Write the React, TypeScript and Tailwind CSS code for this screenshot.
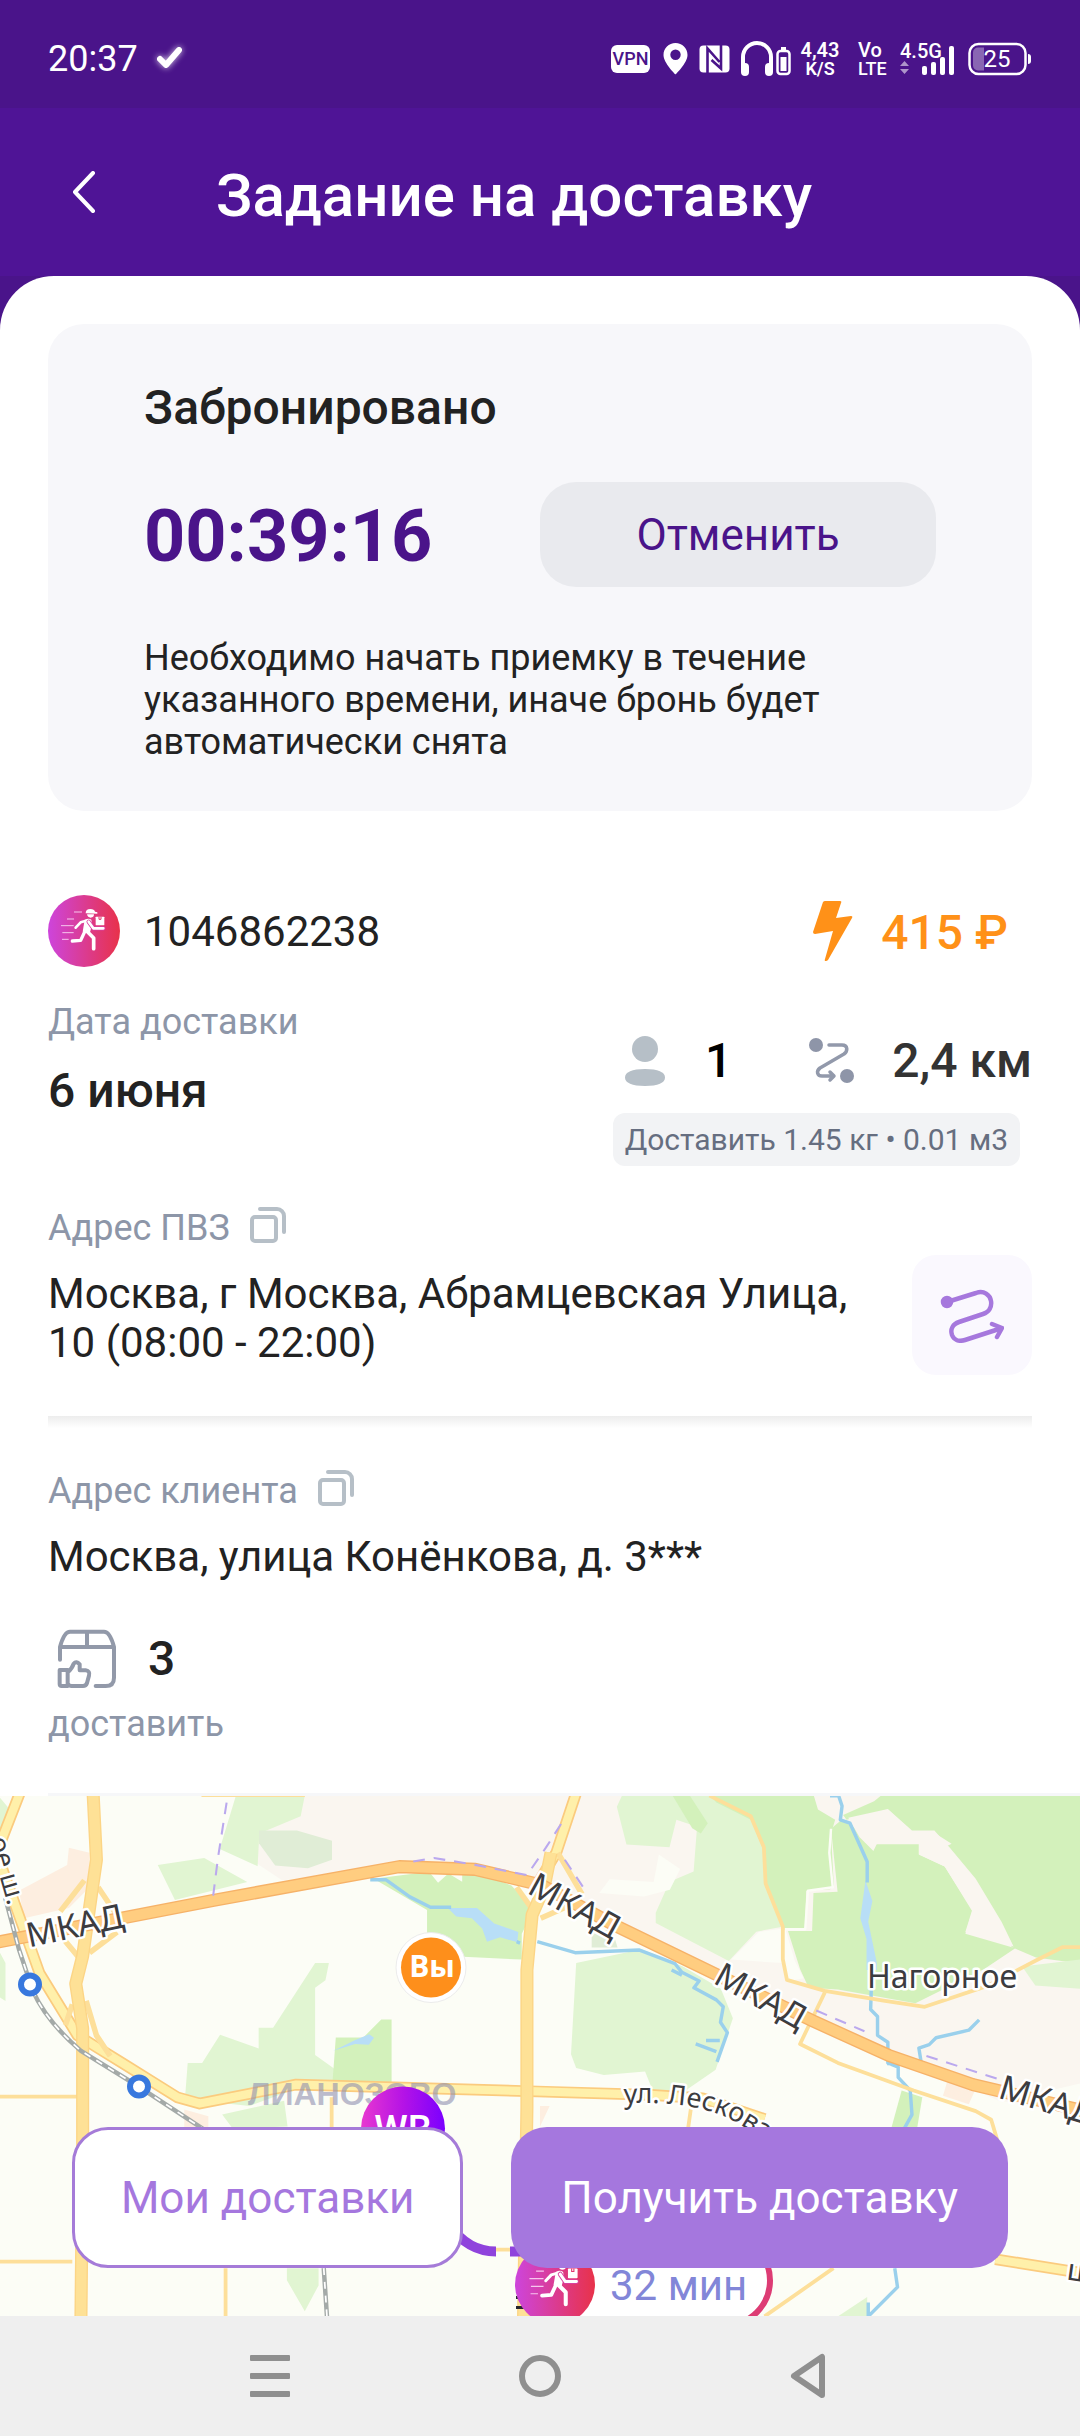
import { useId } from "react";

const ORDER = {
  id: "1046862238",
  date: "6 июня",
  price: "415 ₽",
  clients: "1",
  distance: "2,4 км",
  cargo: "Доставить 1.45 кг • 0.01 м3",
  pickup: "Москва, г Москва, Абрамцевская Улица, 10 (08:00 - 22:00)",
  client: "Москва, улица Конёнкова, д. 3***",
  items: "3",
};

function StatusBar() {
  return (
    <div className="flex h-[108px] items-center justify-between bg-[#4a148a] px-12 pt-2.5 text-white">
      <div className="flex items-center gap-4">
        <span className="text-[36px] leading-[42px]">20:37</span>
        <svg width="32" height="32" viewBox="0 0 32 32" fill="none" className="drop-shadow-[0_0_3px_rgba(255,255,255,0.8)]">
          <path d="M6 16l6 6L25 7" stroke="#fff" strokeWidth="6" strokeLinecap="round" strokeLinejoin="round" />
        </svg>
      </div>
      <div className="flex items-center">
        <span className="flex h-7 w-[39px] items-center justify-center rounded-md bg-white text-[18px] font-medium leading-none text-[#4a148a]">
          VPN
        </span>
        <svg className="ml-3" width="27" height="32" viewBox="0 0 27 32">
          <path
            fill="#fff"
            fillRule="evenodd"
            d="M13.5 0C6.800 0 1.500 5.300 1.500 12c0 8 12 19.500 12 19.500s12-11.500 12-19.500C25.500 5.300 20.200 0 13.500 0zm0 17a5.200 5.200 0 1 1 0-10.400 5.200 5.200 0 0 1 0 10.400z"
          />
        </svg>
        <svg className="ml-2.5" width="31" height="28" viewBox="0 0 31 28">
          <rect x="0.500" y="0.500" width="30" height="27" rx="4" fill="#fff" />
          <path fill="none" stroke="#4a148a" strokeWidth="2.600" d="M8.500 28V3.500L20.500 17M22 0v23.500L12.500 15" />
        </svg>
        <svg className="ml-2.5" width="52" height="36" viewBox="0 0 52 36">
          <path d="M3 30V16a14 14 0 0 1 28 0v14" fill="none" stroke="#fff" strokeWidth="4" />
          <rect x="1" y="22" width="8" height="13" rx="4" fill="#fff" />
          <rect x="25" y="22" width="8" height="13" rx="4" fill="#fff" />
          <rect x="37.500" y="10" width="12" height="23" rx="3" fill="none" stroke="#fff" strokeWidth="2.500" />
          <rect x="41" y="6" width="5" height="3" fill="#fff" />
          <rect x="40.500" y="16" width="6" height="14" fill="#fff" />
        </svg>
        <span className="ml-1.5 flex w-[44px] flex-col items-center font-semibold">
          <span className="text-[20px] leading-[20px]">4,43</span>
          <span className="text-[18px] leading-[18px]">K/S</span>
        </span>
        <span className="ml-4 flex w-[32px] flex-col font-medium">
          <span className="text-[20px] leading-[20px]">Vo</span>
          <span className="text-[18px] leading-[18px]">LTE</span>
        </span>
        <svg className="ml-2.5" width="56" height="38" viewBox="0 0 56 38" fill="#fff">
          <text x="0" y="18" fontSize="20" fontWeight="500">
            4.5G
          </text>
          <path d="M0 26l4.500-5 4.500 5zM0 29h9l-4.500 5z" opacity="0.55" />
          <rect x="22" y="26" width="5" height="9" rx="2" />
          <rect x="31" y="22" width="5" height="13" rx="2" />
          <rect x="40" y="17" width="5" height="18" rx="2" />
          <rect x="49" y="6" width="5" height="29" rx="2" />
        </svg>
        <svg className="ml-3" width="64" height="34" viewBox="0 0 64 34" fill="#fff">
          <rect x="1.500" y="2" width="56" height="30" rx="9" fill="none" stroke="#fff" strokeWidth="2.500" />
          <path d="M16 5.500H10a5 5 0 0 0-5 5v13a5 5 0 0 0 5 5h6z" opacity="0.35" />
          <path d="M60 12q3 0 3 3v4q0 3-3 3z" />
          <text x="29" y="25" fontSize="24" textAnchor="middle">
            25
          </text>
        </svg>
      </div>
    </div>
  );
}

function CourierIcon({ size = 72 }: { size?: number }) {
  const id = useId();
  return (
    <svg viewBox="12 12 216 216" width={size} height={size} fill="none">
      <defs>
        <linearGradient id={id}>
          <stop offset="0" stopColor="#cd45dc" />
          <stop offset="1" stopColor="#e8324a" />
        </linearGradient>
      </defs>
      <circle cx="120" cy="120" r="108" fill={`url(#${id})`} />
      <path d="M90 63h24M69 84h21M51 104h38M55 125h34M54 145h20" stroke="#f6c6ee" strokeWidth="3" />
      <path d="M125 67q0-13 14-13 12 0 14 8l7 2v4z" fill="#fff" />
      <path d="M129 70h21q0 10-10 10-9 0-11-10z" fill="#fff" />
      <path d="M122 86q12-6 20 0l2 16-6 22-22-2z" fill="#fff" />
      <path d="M124 90l-14 4-15 16" stroke="#fff" strokeWidth="8" strokeLinecap="round" strokeLinejoin="round" />
      <path d="M124 118l-14 30-25 2" stroke="#fff" strokeWidth="10" strokeLinecap="round" strokeLinejoin="round" />
      <path d="M128 120l21 21v32" stroke="#fff" strokeWidth="11" strokeLinecap="round" strokeLinejoin="round" />
      <path d="M134 92l14 20h30" stroke="#da3fa0" strokeWidth="13" strokeLinecap="round" strokeLinejoin="round" />
      <path d="M134 92l14 20h30" stroke="#fff" strokeWidth="8" strokeLinecap="round" strokeLinejoin="round" />
      <rect x="155" y="77" width="26" height="26" rx="2" fill="#fff" />
      <path d="M165 77v8h6v-8" stroke="#e2366f" strokeWidth="3" />
    </svg>
  );
}

function CopyButton({ label }: { label: string }) {
  return (
    <button type="button" aria-label={label}>
      <svg width="36" height="36" viewBox="0 0 36 36" fill="none" stroke="#b6bfc7" strokeWidth="4" strokeLinecap="round" strokeLinejoin="round">
        <rect x="2" y="10" width="24" height="24" rx="3" />
        <path d="M10 2h17a7 7 0 0 1 7 7v16" />
      </svg>
    </button>
  );
}

function PackageIcon() {
  return (
    <svg width="64" height="64" viewBox="24 24 192 192" fill="none" stroke="#9299a9" strokeWidth="12" strokeLinecap="round" strokeLinejoin="round">
      <path d="M36 122V84q12-46 30-46h102q18 0 30 46v92q0 25-25 25h-30M36 84h162M117 38v46" />
      <path d="M35 153h24v48H41q-6 0-6-6zM59 160q14-12 18-26 8-10 18 2v18h18q14 2 10 16l-6 22q-3 9-12 9H71q-8 0-12-8" />
    </svg>
  );
}

function MapDrawing() {
  return (
    <svg
      className="absolute inset-0 h-full w-full"
      viewBox="0 0 1080 521"
      preserveAspectRatio="xMidYMid slice"
      role="img"
      aria-label="Карта маршрута"
    >
      <defs>
        <linearGradient id="wb">
          <stop offset="0" stopColor="#e838d0" />
          <stop offset="0.5" stopColor="#b513e6" />
          <stop offset="1" stopColor="#7a00ff" />
        </linearGradient>
        <path id="leskova" d="M624 308 Q700 304 740 329 T810 372" />
      </defs>
      <rect width="1080" height="521" fill="#fcfdf6" />

      {/* terrain and roads share one fine grid */}
      <g transform="translate(0 -15) scale(0.3444)" fill="none" strokeLinejoin="round">
        <path fill="#faf6f0" d="M890 40H3140V960L2900 930 2560 780 2330 690 2080 560 1800 420 1600 300 1400 250 1160 240 820 290 745 240 750 150z" />
        <path fill="#fdeee0" d="M200 195l60 15v100l-60 60-130 30-15-80 140-75zM535 955l70 20v40h-70z" />
        <path fill="#e1f5d2" d="M685 44h200l-12 60-120 50-5 95-110-50zM458 245l135-20 125 70-210 52z" />
        <path fill="#e0edd6" d="M752 145h110l102 30v55l-70 25-95-8-47-65z" />
        <path fill="#e1f5d2" d="M915 530h40l-10 50-30 22v195l62 44 160 40v20l-142-6H860l-135 50-188-20 8-105h42l52-82 112 40v-60h42zM645 970l180-40 10 75-160 5z" />
        <path fill="#d3f1bb" d="M975 746h80l52-52h30v188H965zM1085 285l160-20 130-5 110 45 65 70-35 70v75l-170-8-105-4v-132z" />
        <path fill="#e1f5d2" d="M833 1416h92v50l-40 75-52-90zM0 50l25 30-25 70zM0 500l16 30v110l-16-10z" />
        <path fill="#fcfdf6" d="M1250 270l22 27 30-27 40 24v-30z" />
        <path fill="#b8def7" d="M1300 370h85l50 45 70 25-3 30-50-15-38 13-14-38-30-30-45-5zM968 785l62-31 42-17 14 10-15 20-40-2z" />

        <g transform="translate(1568 0)">
          <path fill="#e1f5d2" d="M115 44h380l120 60 38 90 5 105 50 125-80 15-80 85-212-110v-30l40-90 70-30 10-130-60-20-20 80-125-8-28-110 28-60-62 8z" />
          <path fill="#fcfdf6" d="M345 215l62 42-30 60-75 20-130-10 30-40 128 8z" />
          <path fill="#fcfdf6" d="M710 424l30 100 25 50-50 10-12-60zM635 440l70-10v100l-150-10z" />
          <path fill="#d3f1bb" d="M495 44h300l12 40 50 30-12 40 8 150-10 12-70 4-4 110-62 4-52-125-5-105-38-90-100-50z" />
          <path fill="#d3f1bb" d="M845 140l30-25 100 60v10h125v30l75 35 80 130-20 65 145 42-90 60-200 100-225-40-85-5-25-55-35-110h70l4-110 70-4z" />
          <path fill="#d3f1bb" d="M880 100l90-40 20-16h600v490l-150-20-70-30-15-30-90-110-90-150 20-10-55-35h-60l-70-65-120 30z" />
          <path fill="#faf6f0" d="M895 108l115-25 70 62h65l45 50 75 90 75 125 35 72-140-42 20-65-80-125-75-35v-35h-120l-12 25-40-40z" />
          <path fill="#d3f1bb" d="M385 44h50l52 80-20 30-25-15z" />
          <path fill="#e1f5d2" d="M105 530l190-40 120 50 110 65 35 85-50 150-80 55-20 25h-75l-30-75-120 10-80-20-15-40z" />
          <path fill="#e0edd6" d="M150 435h60l15 50h-75z" />
          <path fill="#e1f5d2" d="M1400 540l168-20v85l-130-10z" />
          <path fill="#fcfdf6" d="M1568 880l-130 30 130 60z" />
          <path fill="#d3f1bb" d="M1050 900l60 20-15 90h-75z" />
          <path fill="#fdeee0" d="M1185 865l80 30-20 45-75-25zM0 945h28L0 1005z" />
          <path fill="#e1f5d2" d="M950 1500v56h-85z" />
          <path fill="#b8def7" d="M945 290l20 60-12 60 25 120v20h-30v-90l-18-60z" />
          <path stroke="#fcfdf6" strokeWidth="7" d="M845 140l-5 70 10 100-72 10-8 112h-60" />
        </g>

        {/* rivers */}
        <g stroke="#9ad0ec" strokeWidth="10">
          <path d="M1075 288h45l70 50 60 30h60M1500 468l10 4M1560 468l110 32 185-8 105 40 20 25 50 25-15 20 65 35 20 20-8 45 20 30-30 85M1950 550l30 15M2020 765l60 22M2050 755h40" />
          <path d="M2410 44h25l10 30-5 40 28 10 50 112v60M2530 600l-2 65 20 20v55l30 20v60l30 12v30l35 38 5 70-25 45M2576 822l100 5-8-50 30-10 20-20 95-22 30-30M2598 1416l8 55-85 85v-40" />
        </g>

        {/* minor streets */}
        <g stroke="#fddf9a" strokeWidth="11">
          <path d="M0 918h230M0 1397h210M655 1416v140M963 920v90M2010 925l-12 85M2060 44l120 60 38 90 5 105 50 125v95l12 60 110 32 170 28 120 18 180-60 150-78 70-35h60" />
          <path d="M2395 615l-72 150 110 55 220 80 180 60 45 25 18 60M1440 1362h80M2420 1416l-200 140" />
        </g>
        <path d="M585 44h300" stroke="#fddf9a" strokeWidth="8" />

        {/* avenues */}
        <g stroke="#fbcb7e" strokeWidth="34">
          <path d="M60 30L-10 210l75 210 50 140 110 180 130 80 160 100 65 18 280-55 700 20 330 10 150 10 180 60" />
          <path d="M2890 1390l250 40M1675 30l-60 180-60 100" />
        </g>
        <g stroke="#fff0aa" strokeWidth="24">
          <path d="M60 30L-10 210l75 210 50 140 110 180 130 80 160 100 65 18 280-55 700 20 330 10 150 10 180 60" />
          <path d="M2890 1390l250 40M1675 30l-60 180-60 100" />
        </g>
        <path
          d="M245 290l-70 90M285 310l50 75M180 455l50 60M340 440l-80 60M210 650l-20 60M250 640l30 100 40 60M1620 210l70 120M1500 310l50 70M1660 360l-90 40"
          stroke="#fddf9a"
          strokeWidth="16"
        />
        <path d="M270 30l10 200-20 140-20 140-20 80 20 130v360l-5 480M1600 210l-20 100-35 80-15 160v400l-10 620" stroke="#fcd586" strokeWidth="38" />
        <path d="M270 30l10 200-20 140-20 140-20 80 20 130v360l-5 480M1600 210l-20 100-35 80-15 160v400l-10 620" stroke="#fee196" strokeWidth="30" />

        {/* ring road */}
        <path d="M-10 470L620 348 1160 250l220 8 190 45 220 120 310 150 260 125 220 100 245 85 315 75" stroke="#f6b268" strokeWidth="38" />
        <path d="M-10 470L620 348 1160 250l220 8 190 45 220 120 310 150 260 125 220 100 245 85 315 75" stroke="#ffcd80" strokeWidth="30" />

        {/* district boundary */}
        <path d="M658 64l-25 160-14 110M1200 235l60-10 120 20 150 30 55-80 45-70M1640 230l60 90M2370 668l140 60M2690 800l250 80" stroke="#baa8ee" strokeWidth="6" strokeDasharray="34 26" />

        {/* railway */}
        <path d="M15 340l40 150 40 120q40 90 140 175l170 105 190 125M940 1416l10 150" stroke="#a4aaa8" strokeWidth="13" />
        <path d="M15 340l40 150 40 120q40 90 140 175l170 105 190 125M940 1416l10 150" stroke="#fff" strokeWidth="5" strokeDasharray="20 20" />
      </g>

      <g fill="#fff" stroke="#3878de" strokeWidth="6">
        <circle cx="30" cy="189" r="9" />
        <circle cx="139" cy="291" r="9" />
      </g>

      <g className="font-['Noto_Sans',sans-serif]" fill="#3c3c40" stroke="#fff" strokeWidth="5" paintOrder="stroke" strokeLinejoin="round" fontSize="34">
        <text transform="translate(29 152) rotate(-12)">МКАД</text>
        <text transform="translate(526 97) rotate(29)">МКАД</text>
        <text transform="translate(712 187) rotate(29)">МКАД</text>
        <text transform="translate(997 302) rotate(17)">МКАД</text>
        <text x="867" y="192" fontSize="32">
          Нагорное
        </text>
        <text transform="translate(-11 44) rotate(74)" fontSize="27">
          ое ш.
        </text>
        <text fontSize="27">
          <textPath href="#leskova">ул. Лескова</textPath>
        </text>
        <text transform="translate(1066 484) rotate(8)" fontSize="30">
          ш.
        </text>
      </g>
      <text className="font-['Liberation_Sans',sans-serif]" x="248" y="309" fontSize="32" fontWeight="700" fill="#8f8fb0" fillOpacity="0.6">
        ЛИАНОЗОВО
      </text>

      <circle cx="431" cy="172" r="35" fill="#fff" stroke="#ececec" />
      <circle cx="431" cy="172" r="30" fill="#fe8f1b" />
      <text x="432" y="181" fontSize="30" fontWeight="700" fill="#fff" textAnchor="middle" className="font-['Open_Sans',sans-serif]">
        Вы
      </text>

      <path d="M450 430q18 26 46 26M510 456h20" stroke="#8f43dc" strokeWidth="10" fill="none" />
      <circle cx="403" cy="333" r="42" fill="url(#wb)" />
      <text x="403" y="347" fontSize="38" fontWeight="500" fill="#fff" textAnchor="middle">
        WB
      </text>

      <path d="M516 492h16M516 502h16M516 512h16" stroke="#26262e" strokeWidth="3" />
      <rect x="530" y="440" width="240" height="90" rx="45" fill="#fff" stroke="#dd3c74" strokeWidth="6" />
      <text x="610" y="504" fontSize="42" fill="#8286d8">
        32 мин
      </text>
      <g transform="translate(515 449)">
        <CourierIcon size={80} />
      </g>
    </svg>
  );
}

function ReservationCard() {
  return (
    <section className="rounded-[36px] bg-[#f7f7fa] px-24 pt-14 pb-12">
      <h2 className="text-[48px] font-medium leading-[56px]">Забронировано</h2>
      <div className="mt-[46px] flex items-center justify-between">
        <span className="pt-1 text-[72px] font-bold leading-[84px] text-[#4a148a]">00:39:16</span>
        <button type="button" className="h-[105px] w-1/2 rounded-[36px] bg-[#e9eaee] text-[44px] text-[#4a148a]">
          Отменить
        </button>
      </div>
      <p className="mt-[50px] text-[36px] leading-[42px]">
        Необходимо начать приемку в течение указанного времени, иначе бронь будет автоматически снята
      </p>
    </section>
  );
}

function OrderSummary() {
  return (
    <section className="mt-[84px]">
      <div className="flex items-center justify-between pr-6">
        <div className="flex items-center gap-6">
          <CourierIcon />
          <span className="text-[42px] leading-[49px]">{ORDER.id}</span>
        </div>
        <div className="flex items-center gap-7 text-[#ff9118]">
          <svg width="40" height="60" viewBox="0 0 40 60" fill="currentColor">
            <path d="M10 1q1-1 2-1h15q2 0 1 2l-5 15 15-2q2 0 1 2L15 59q-1 1-2 1-2 0-1-2l8-28-18 3q-2 0-2-2z" />
          </svg>
          <span className="pt-1 text-[48px] font-medium leading-[56px]">{ORDER.price}</span>
        </div>
      </div>

      <div className="mt-[34px] flex justify-between">
        <div>
          <p className="text-[36px] leading-[42px] text-[#8d96a8]">Дата доставки</p>
          <p className="mt-5 text-[48px] font-medium leading-[56px]">{ORDER.date}</p>
        </div>
        <div className="flex flex-col items-end pt-8">
          <div className="flex items-center text-[48px] font-medium leading-[56px]">
            <svg width="40" height="50" viewBox="0 0 40 50" fill="#b6bfc7">
              <circle cx="20" cy="13" r="13" />
              <path d="M20 33c13 0 20 3 20 8.500S33 50 20 50 0 47 0 41.500 7 33 20 33z" />
            </svg>
            <span className="ml-10 text-black">{ORDER.clients}</span>
            <svg className="ml-19" width="48" height="48" viewBox="0 0 48 48" fill="#8e95a8">
              <circle cx="8" cy="8" r="7" />
              <circle cx="39" cy="39" r="7" />
              <path
                d="M21 8h13c6 0 6 6 2 9L12 31c-4 3-3 8 2 8h11M22 35l4 4-4 4"
                fill="none"
                stroke="#9299ab"
                strokeWidth="3.500"
                strokeLinecap="round"
                strokeLinejoin="round"
              />
            </svg>
            <span className="ml-9 text-[#333]">{ORDER.distance}</span>
          </div>
          <p className="mt-6 mr-3 rounded-xl bg-[#f2f3f5] px-3 py-2 text-[30px] leading-[37px] text-[#666e80]">{ORDER.cargo}</p>
        </div>
      </div>
    </section>
  );
}

function Addresses() {
  return (
    <>
      <section className="mt-[41px] flex items-end justify-between gap-8">
        <div className="pb-2">
          <div className="flex items-start gap-5">
            <h3 className="text-[36px] leading-[42px] text-[#8d96a8]">Адрес ПВЗ</h3>
            <CopyButton label="Скопировать адрес ПВЗ" />
          </div>
          <p className="mt-5 text-[42px] leading-[49px]">{ORDER.pickup}</p>
        </div>
        <button type="button" aria-label="Маршрут" className="flex h-[120px] w-[120px] shrink-0 items-center justify-center rounded-3xl bg-[#faf8fe]">
          <svg width="64" height="56" viewBox="0 0 64 56" fill="none" stroke="#a678dd" strokeWidth="4.500" strokeLinecap="round" strokeLinejoin="round">
            <circle cx="7" cy="15" r="4" fill="#a678dd" />
            <path d="M7 15l29-9c8-3 14 2 15 8 1 6-2 11-8 13l-24 8c-6 2-9 7-7 13 2 5 7 7 13 5l34-11" />
            <path d="M52 37l10 4-5 9" />
          </svg>
        </button>
      </section>

      <div className="mt-[41px] h-3 bg-linear-to-b from-[#ededed] to-white" />

      <section className="mt-[42px]">
        <div className="flex items-start gap-5">
          <h3 className="text-[36px] leading-[42px] text-[#8d96a8]">Адрес клиента</h3>
          <CopyButton label="Скопировать адрес клиента" />
        </div>
        <p className="mt-5 text-[42px] leading-[49px]">{ORDER.client}</p>
        <div className="mt-[46px] ml-2 flex items-center gap-7">
          <PackageIcon />
          <span className="text-[48px] font-medium leading-[56px]">{ORDER.items}</span>
        </div>
        <p className="mt-3 text-[36px] leading-[42px] text-[#8d96a8]">доставить</p>
      </section>
    </>
  );
}

function NavBar() {
  return (
    <nav className="grid h-[120px] grid-cols-3 items-center justify-items-center bg-[#efefef] px-[135px]">
      <button type="button" aria-label="Недавние">
        <svg width="42" height="44" viewBox="0 0 42 44" fill="#8f8f8f">
          <rect x="1" y="1" width="40" height="6" rx="1" />
          <rect x="1" y="19" width="40" height="6" rx="1" />
          <rect x="1" y="37" width="40" height="6" rx="1" />
        </svg>
      </button>
      <button type="button" aria-label="Домой">
        <svg width="42" height="42" viewBox="0 0 42 42" fill="none" stroke="#8f8f8f" strokeWidth="6">
          <circle cx="21" cy="21" r="18" />
        </svg>
      </button>
      <button type="button" aria-label="Назад" className="pr-1">
        <svg width="36" height="46" viewBox="0 0 36 46" fill="none" stroke="#8f8f8f" strokeWidth="6" strokeLinejoin="round">
          <path d="M32 4v38L4 23z" />
        </svg>
      </button>
    </nav>
  );
}

export default function App() {
  return (
    <div className="flex min-h-screen flex-col bg-[#4a148a] font-[Roboto,sans-serif] text-[#222]">
      <StatusBar />
      <header className="flex h-[168px] items-center bg-[#4f1496] pr-12 pl-[72px] text-white">
        <button type="button" aria-label="Назад" className="w-[144px]">
          <svg width="24" height="42" viewBox="0 0 24 42" fill="none" stroke="#fff" strokeWidth="4" strokeLinecap="round" strokeLinejoin="round">
            <path d="M21 2L3 21l18 19" />
          </svg>
        </button>
        <h1 className="pt-2 text-[60px] font-medium leading-[72px]">Задание на доставку</h1>
      </header>

      <main className="flex flex-1 flex-col rounded-t-[54px] bg-white pt-12">
        <div className="px-12">
          <ReservationCard />
          <OrderSummary />
          <Addresses />
        </div>

        <div className="mt-12 ml-12 h-[3px] bg-[#f6f7f9]" />
        <section className="relative min-h-[520px] flex-1 overflow-hidden">
          <MapDrawing />
          <div className="absolute inset-x-[72px] bottom-12 grid grid-cols-[391fr_496fr] gap-12">
            <button type="button" className="h-[141px] rounded-[36px] border-3 border-[#a57bd8] bg-white text-[44px] text-[#a577de]">
              Мои доставки
            </button>
            <button type="button" className="h-[141px] rounded-[36px] bg-[#a577de] text-[44px] text-white">
              Получить доставку
            </button>
          </div>
        </section>
      </main>
      <NavBar />
    </div>
  );
}
